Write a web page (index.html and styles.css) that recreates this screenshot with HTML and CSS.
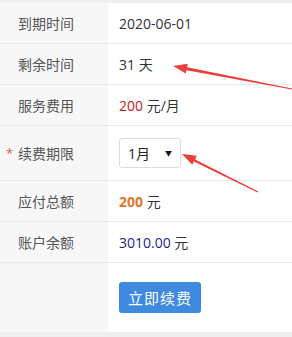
FILE: index.html
```html
<!DOCTYPE html>
<html lang="zh-CN">
<head>
    <meta charset="UTF-8">
    <title>续费</title>
    <link rel="stylesheet" href="styles.css">
</head>
<body>
    <div class="panel">
        <div class="row">
            <div class="label">到期时间</div>
            <div class="value"><span>2020-06-01</span></div>
        </div>
        <div class="row">
            <div class="label">剩余时间</div>
            <div class="value"><span>31 天</span></div>
        </div>
        <div class="row">
            <div class="label">服务费用</div>
            <div class="value"><span><span class="price">200</span> 元/月</span></div>
        </div>
        <div class="row row-select">
            <div class="label"><span class="required">*</span>续费期限</div>
            <div class="value">
                <div class="select">1月<span class="caret">▼</span></div>
            </div>
        </div>
        <div class="row">
            <div class="label">应付总额</div>
            <div class="value"><span><span class="total">200</span> 元</span></div>
        </div>
        <div class="row">
            <div class="label">账户余额</div>
            <div class="value"><span><span class="balance">3010.00</span> 元</span></div>
        </div>
        <div class="row row-action">
            <div class="label"></div>
            <div class="value">
                <button class="btn">立即续费</button>
            </div>
        </div>
    </div>

    <!-- annotation arrows -->
    <svg class="arrows" width="292" height="337" viewBox="0 0 292 337">
        <polygon points="173,66 187.7,63.8 187.1,67.2 292.1,88.5 291.9,89.5 186.5,70.2 185.8,73.6" />
        <polygon points="182,154 196.7,155.8 195.2,159.6 258.3,191.5 257.7,192.5 193.8,161.6 192.3,164.8" />
    </svg>
</body>
</html>
```

FILE: styles.css
```css
body {
    margin: 0;
    background-color: #f0f0f0;
    font-family: "Open Sans", "Noto Sans CJK SC", sans-serif;
    font-size: 14px;
    color: #333;
}
.panel {
    margin-top: 3px;
    height: 329px;
    background-color: #fff;
    display: flex;
    flex-direction: column;
}
.row {
    display: flex;
    height: 40px;
    border-bottom: 1px solid #e9e9e9;
}
.row-select {
    height: 54px;
}
.row-action {
    flex: 1;
    border-bottom: none;
}
.label {
    position: relative;
    width: 108px;
    flex-shrink: 0;
    padding-left: 18px;
    box-sizing: border-box;
    background-color: #f7f7f7;
    color: #555;
    display: flex;
    align-items: center;
}
.required {
    position: absolute;
    left: 6px;
    color: #e0603c;
    font-size: 13px;
}
.value {
    padding-left: 11px;
    display: flex;
    align-items: center;
}
.price {
    color: #c0201c;
}
.total {
    color: #e4772a;
    font-weight: bold;
}
.balance {
    color: #1f1f8c;
}
.select {
    width: 62px;
    height: 30px;
    box-sizing: border-box;
    border: 1px solid #dcdcdc;
    border-radius: 3px;
    padding-left: 8px;
    display: flex;
    align-items: center;
    color: #222;
}
.caret {
    margin-left: auto;
    margin-right: 8px;
    font-size: 7px;
    color: #111;
}
.btn {
    width: 82px;
    height: 31px;
    border: none;
    border-radius: 3px;
    background-color: #3d8ae0;
    color: #fff;
    font-family: inherit;
    font-size: 15px;
    letter-spacing: 1px;
    margin-top: -1px;
}
.arrows {
    position: absolute;
    top: 0;
    left: 0;
    pointer-events: none;
}
.arrows polygon {
    fill: #e8403a;
}
```
